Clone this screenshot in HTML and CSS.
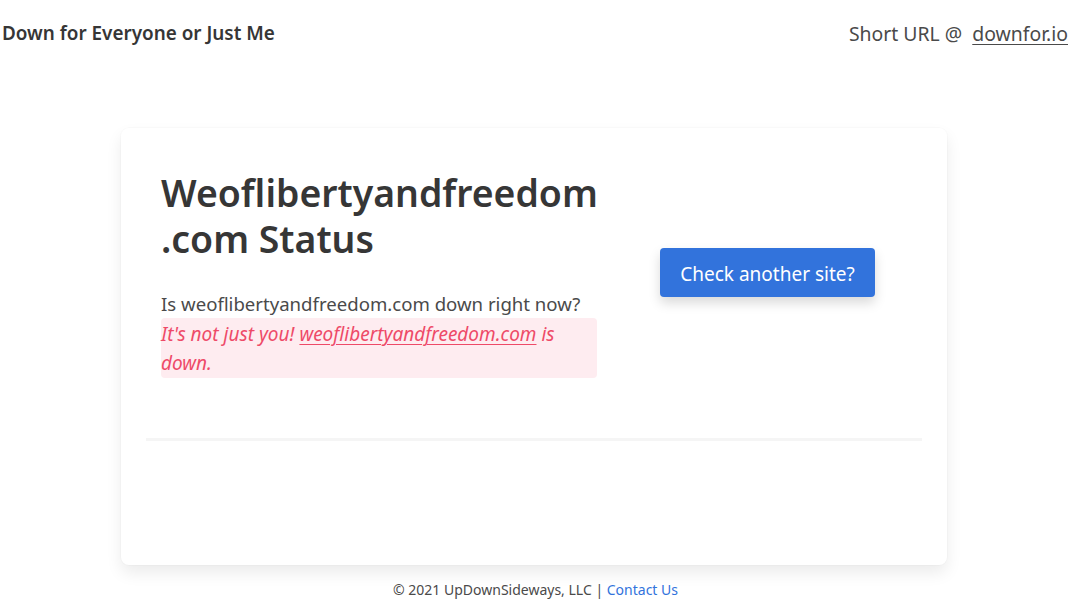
FILE: index.html
```html
<!DOCTYPE html>
<html lang="en">
<head>
<meta charset="utf-8">
<title>Weoflibertyandfreedom.com Status</title>
<link rel="stylesheet" href="styles.css">
</head>
<body>
<header class="topbar">
  <div class="brand">Down for Everyone or Just Me</div>
  <div class="short">Short URL @ &nbsp;<a href="#" class="short-link">downfor.io</a></div>
</header>
<main class="card">
  <div class="columns">
    <div class="col-left">
      <h1 class="title">Weoflibertyandfreedom<br>.com Status</h1>
      <p class="question">Is weoflibertyandfreedom.com down right now?</p>
      <p class="result">It's not just you! <a href="#" class="result-link">weoflibertyandfreedom.com</a> is<br>down.</p>
    </div>
    <div class="col-right">
      <a href="#" class="btn">Check another site?</a>
    </div>
  </div>
  <hr class="divider">
</main>
<footer class="footer">© 2021 UpDownSideways, LLC | <a href="#" class="footer-link">Contact Us</a></footer>
</body>
</html>
```
FILE: styles.css
```css
* { box-sizing: border-box; }
html, body { margin: 0; padding: 0; background: #fff; }
body {
  font-family: "Noto Sans", "Open Sans", sans-serif;
  color: #4a4a4a;
  width: 1071px;
  height: 609px;
  overflow: hidden;
}
.topbar {
  display: flex;
  justify-content: space-between;
  align-items: center;
  height: 66px;
  padding: 0 3px 0 2px;
}
.brand {
  font-size: 18.9px;
  font-weight: 600;
  color: #363636;
}
.short {
  font-size: 19.4px;
  color: #4a4a4a;
}
.short-link { color: #4a4a4a; text-decoration: underline; text-underline-offset: 3px; text-decoration-thickness: 1px; }
.card {
  margin: 62px 0 0 121px;
  width: 826px;
  height: 437px;
  background: #fff;
  border-radius: 8px;
  box-shadow: 0 8px 16px rgba(10,10,10,0.08), 0 0 0 1px rgba(10,10,10,0.015);
  padding: 42px 25px 0;
}
.columns {
  display: grid;
  grid-template-columns: 451px 1fr;
}
.col-left { padding-left: 15px; }
.title {
  margin: 0;
  font-size: 37.4px;
  line-height: 46px;
  font-weight: 600;
  color: #363636;
}
.question {
  margin: 28px 0 0;
  font-size: 18.6px;
  line-height: 28px;
}
.result {
  margin: 0;
  padding-top: 2px;
  font-size: 19px;
  line-height: 29px;
  font-style: italic;
  color: #ee4a68;
  background: #feecf0;
  border-radius: 4px;
}
.result-link { color: #ee4a68; text-decoration: underline; text-decoration-thickness: 1px; text-underline-offset: 3px; }
.col-right {
  display: flex;
  justify-content: center;
  padding: 78px 0 0 16px;
  align-items: flex-start;
}
.btn {
  display: inline-flex;
  align-items: center;
  justify-content: center;
  width: 215px;
  height: 49px;
  padding-top: 3px;
  background: #3273dc;
  color: #fff;
  font-size: 19px;
  text-decoration: none;
  border-radius: 4px;
  box-shadow: 0 6px 12px rgba(10,10,10,0.15);
}
.divider {
  border: 0;
  height: 3px;
  background: #f5f5f5;
  margin: 60px 0 0;
}
.footer {
  text-align: center;
  font-size: 14px;
  color: #4a4a4a;
  margin-top: 15px;
}
.footer-link { color: #3273dc; text-decoration: none; }
```
